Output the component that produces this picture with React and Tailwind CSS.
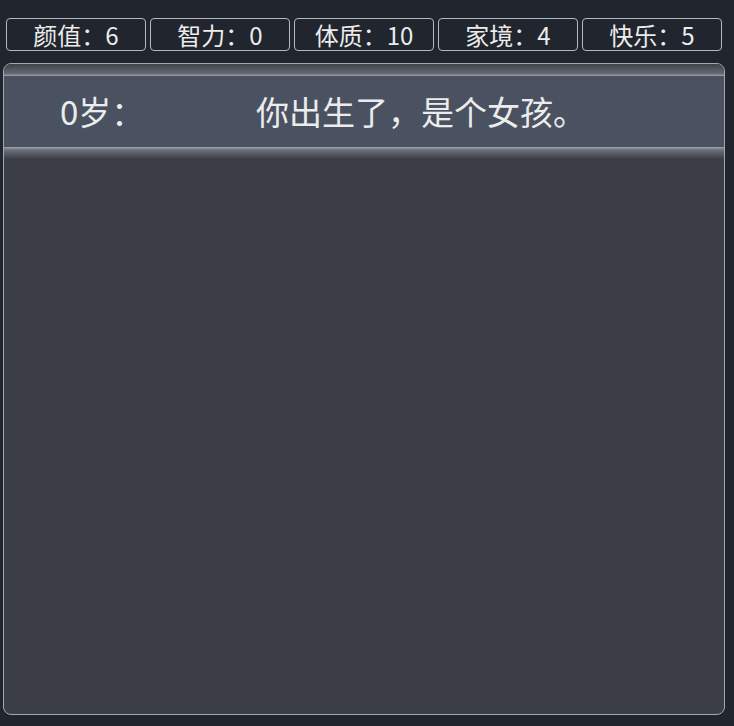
export default function App() {
  const stats = [
    ["颜值", 6],
    ["智力", 0],
    ["体质", 10],
    ["家境", 4],
    ["快乐", 5],
  ];
  const font = { fontFamily: '"Noto Sans CJK SC", "Noto Sans", sans-serif' };
  return (
    <div className="min-h-screen w-full bg-[#21252e] text-[#ececec]" style={font}>
      <div className="pt-[18px] pl-[6px] flex gap-[4px]">
        {stats.map(([k, v]) => (
          <div
            key={k}
            className="w-[140px] h-[33px] rounded-[4px] border border-[#b4b8bf] flex items-center justify-center text-[24px] leading-none"
          >
            {k}：{v}
          </div>
        ))}
      </div>
      <div className="mt-[12px] ml-[3px] w-[722px] h-[652px] rounded-[8px] border border-[#a2a6ad] bg-[#3b3e47] overflow-hidden">
        <div className="h-[12px] bg-[linear-gradient(to_bottom,#3e424b,#646973_80%,#9ea2a9)]" />
        <div className="h-[71px] bg-[#4a5262] flex items-center text-[33px] leading-none">
          <span className="ml-[56px] w-[196px]">0岁：</span>
          <span>你出生了，是个女孩。</span>
        </div>
        <div className="h-[12px] bg-[linear-gradient(to_bottom,#a0a4ab,#6a6f78_25%,#3b3e47)]" />
      </div>
    </div>
  );
}
